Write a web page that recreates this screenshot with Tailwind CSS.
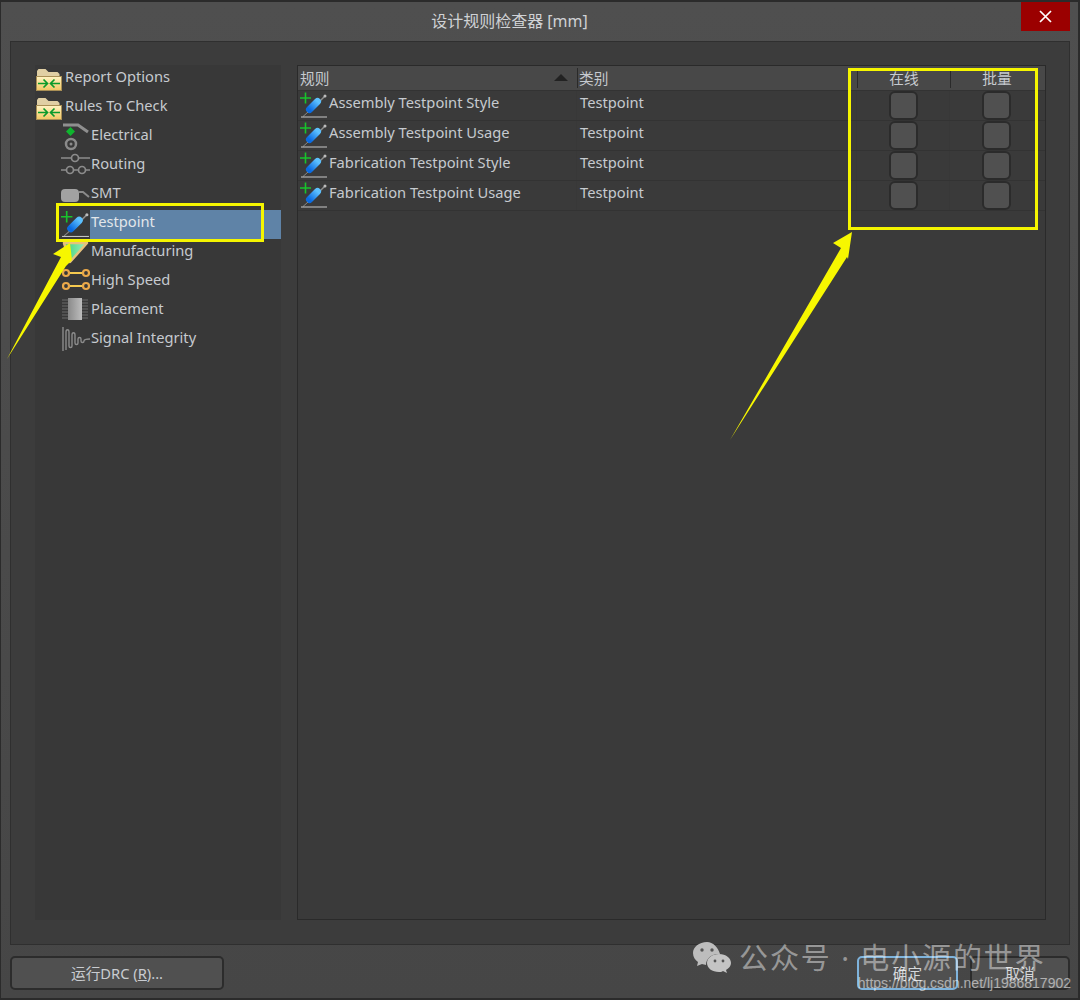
<!DOCTYPE html>
<html lang="en">
<head>
    <meta charset="UTF-8">
    <title>设计规则检查器 [mm]</title>
    <script src="https://cdn.jsdelivr.net/npm/@tailwindcss/browser@4"></script>
</head>
<body class="bg-[#4a4a4a] overflow-hidden font-['Noto_Sans','Noto_Sans_CJK_SC',sans-serif] text-[#c6cacf]">
    <svg class="absolute w-0 h-0">
        <defs>
            <linearGradient id="folderFront" x1="0" y1="0" x2="0" y2="1"><stop offset="0" stop-color="#fff4c4"/><stop offset="1" stop-color="#f2c763"/></linearGradient>
            <linearGradient id="pill" x1="1" y1="0" x2="0" y2="1" gradientUnits="objectBoundingBox"><stop offset="0" stop-color="#5cc0ff"/><stop offset="1" stop-color="#0a6ae0"/></linearGradient>
            <linearGradient id="chip" x1="0" y1="0" x2="1" y2="0"><stop offset="0" stop-color="#8a8a8a"/><stop offset="1" stop-color="#bdbdbd"/></linearGradient>
            <linearGradient id="mfg" x1="0" y1="0" x2="1" y2="0"><stop offset="0" stop-color="#3fd07a"/><stop offset="1" stop-color="#9df0bd"/></linearGradient>
        </defs>
        <symbol id="folder" viewBox="0 0 26 23">
            <path d="M1 22V3l1.500-2h7l3 3h9l2 2v3H1z" fill="#e0cfa4"/>
            <rect x="0.500" y="8.500" width="25" height="14" fill="url(#folderFront)" stroke="#a98f55"/>
            <path d="M2 15.500h9M7.500 11.500l4 4-4 4M24 15.500h-9M18.500 11.500l-4 4 4 4" fill="none" stroke="#0b9a2b" stroke-width="1.700"/>
        </symbol>
        <symbol id="testpoint" viewBox="0 0 28 27">
            <path d="M0 7h11M5.500 1.500v11" stroke="#18c42c" stroke-width="1.600"/>
            <path d="M20 10l5-5" stroke="#8f8f8f" stroke-width="1.500"/>
            <circle cx="25" cy="5" r="1.500" fill="#bbb"/>
            <path d="M9.500 18.500l8-8" stroke="url(#pill)" stroke-width="7" stroke-linecap="round"/>
            <path d="M8 21l-5 4.500" stroke="#888" stroke-width="1"/>
            <path d="M1 26h26" stroke="#c8c8c8" stroke-width="1"/>
        </symbol>
    </svg>

    <div class="relative w-[1080px] h-[1000px] border-t-2 border-l border-r-2 border-b-2 border-[#2b2b2b] bg-gradient-to-b from-[#4f4f4f] to-[#464646]">
        <!-- title bar -->
        <div class="relative h-[39px] flex items-center justify-center text-[16px] text-[#d0d2d5]">
            <span class="mr-[60px] -mt-[2px]">设计规则检查器 [mm]</span>
            <div class="absolute right-[8px] top-0 w-[49px] h-[29px] bg-[#9b0000] flex items-center justify-center">
                <svg class="w-[13px] h-[13px]" viewBox="0 0 13 13"><path d="M1 1l11 11M12 1L1 12" stroke="#fff" stroke-width="1.700"/></svg>
            </div>
        </div>

        <!-- main panel -->
        <div class="ml-[9px] w-[1060px] h-[904px] bg-[#3c3c3c] border border-[#2f2f2f] pt-[23px] pl-[24px] flex gap-[16px]">
            <!-- tree -->
            <div class="w-[246px] h-[855px] bg-[#383838] text-[14.7px] pt-[1px]">
                <div class="h-[29px] flex"><svg class="w-[26px] h-[23px] ml-[1px] mt-[2px]"><use href="#folder"/></svg><span class="ml-[3px] -mt-[1px]">Report Options</span></div>
                <div class="h-[29px] flex"><svg class="w-[26px] h-[23px] ml-[1px] mt-[2px]"><use href="#folder"/></svg><span class="ml-[3px] -mt-[1px]">Rules To Check</span></div>
                <div class="h-[29px] flex pl-[26px]">
                    <svg class="w-[30px] h-[29px] -mt-[1px]" viewBox="0 0 30 29"><path d="M2 2h15l10 7" fill="none" stroke="#8f8f8f" stroke-width="3"/><path d="M9.500 4l4.500 4.500-4.500 4.500L5 8.500z" fill="#0fb52e"/><circle cx="10" cy="21" r="5" fill="none" stroke="#8a8a8a" stroke-width="2.500"/><circle cx="10" cy="21" r="1.500" fill="#8a8a8a"/></svg>
                    <span class="-mt-[1px]">Electrical</span>
                </div>
                <div class="h-[29px] flex pl-[25px]">
                    <svg class="w-[31px] h-[29px] -mt-[1px]" viewBox="0 0 31 29" fill="none" stroke="#8c8c8c" stroke-width="1.700"><path d="M1 6h10m8 0h11M1 18h5m8 0h4m7 0h5"/><circle cx="15" cy="6" r="3.500"/><circle cx="10" cy="18" r="3.500"/><circle cx="22" cy="18" r="3.500"/></svg>
                    <span class="-mt-[1px]">Routing</span>
                </div>
                <div class="h-[29px] flex pl-[26px]">
                    <svg class="w-[30px] h-[29px] -mt-[1px]" viewBox="0 0 30 29"><rect x="0" y="8" width="18" height="13" rx="4" fill="#a2a2a2"/><path d="M18 11h4l6 5" fill="none" stroke="#8a8a8a" stroke-width="2"/></svg>
                    <span class="-mt-[1px]">SMT</span>
                </div>
                <div class="h-[29px] flex pl-[26px]">
                    <svg class="w-[29px] h-[29px] -mt-[2px]"><use href="#testpoint"/></svg>
                    <span class="flex-1 bg-[#5f83a7] text-[#e2e6ea] h-[29px] -mt-[1px] leading-[23px] pl-[1px]">Testpoint</span>
                </div>
                <div class="h-[29px] flex pl-[26px]">
                    <svg class="w-[30px] h-[29px] -mt-[1px]" viewBox="0 0 30 29"><path d="M3 4h23L9 23z" fill="url(#mfg)" stroke="#e6c27c" stroke-width="2.500" stroke-linejoin="round"/></svg>
                    <span class="-mt-[1px]">Manufacturing</span>
                </div>
                <div class="h-[29px] flex pl-[26px]">
                    <svg class="w-[30px] h-[29px] -mt-[1px]" viewBox="0 0 30 29" fill="none" stroke="#eba94a" stroke-width="2.200"><path d="M7 5h15M7 18h15" stroke="#f4c94f"/><circle cx="5" cy="5" r="3"/><circle cx="25" cy="5" r="3"/><circle cx="5" cy="18" r="3"/><circle cx="25" cy="18" r="3"/></svg>
                    <span class="-mt-[1px]">High Speed</span>
                </div>
                <div class="h-[29px] flex pl-[26px]">
                    <svg class="w-[30px] h-[29px] -mt-[1px]" viewBox="0 0 30 29"><path d="M1 3h26M1 6h26M1 9h26M1 12h26M1 15h26M1 18h26M1 21h26" stroke="#6a6a6a"/><rect x="7" y="1" width="14" height="22" fill="url(#chip)"/></svg>
                    <span class="-mt-[1px]">Placement</span>
                </div>
                <div class="h-[29px] flex pl-[26px]">
                    <svg class="w-[30px] h-[29px] -mt-[1px]" viewBox="0 0 30 29"><path d="M2 1v24M5 24V6c0-3 3-3 3 0v14c0 2 3 2 3 0V9c0-3 3-3 3 0v8c0 2 3 2 3 0v-4c0-2 3-2 3 0v2c0 2 3 2 3 0 0-1 2-2 6-2" fill="none" stroke="#8b8b8b" stroke-width="1.400"/></svg>
                    <span class="-mt-[1px]">Signal Integrity</span>
                </div>
            </div>

            <!-- rules table -->
            <div class="w-[749px] h-[855px] border border-[#2a2a2a] bg-[#3a3a3a] text-[14.7px]">
                <div class="h-[25px] bg-[#484848] border-b border-[#333] flex items-center">
                    <div class="w-[279px] pl-[2px] flex items-center justify-between pr-[9px]"><span>规则</span><span class="w-0 h-0 border-l-[7px] border-r-[7px] border-b-[7px] border-l-transparent border-r-transparent border-b-[#222]"></span></div>
                    <div class="w-[280px] h-[20px] border-l border-[#2a2a2a] pl-[1px] flex items-center">类别</div>
                    <div class="w-[93px] h-[20px] border-l border-[#2a2a2a] flex items-center justify-center">在线</div>
                    <div class="w-[93px] h-[20px] border-l border-[#2a2a2a] flex items-center justify-center">批量</div>
                </div>
                <div class="h-[30px] flex items-center border-b border-[#333]">
                    <div class="w-[279px] h-full flex border-r border-[#383838]"><svg class="w-[28px] h-[27px] ml-[2px]"><use href="#testpoint"/></svg><span class="ml-[1px]">Assembly Testpoint Style</span></div>
                    <div class="w-[280px] h-full border-r border-[#383838] pl-[3px]">Testpoint</div>
                    <div class="w-[93px] h-full border-r border-[#383838] flex items-center justify-center"><span class="w-[29px] h-[29px] rounded-[6px] bg-[#505050] border-2 border-[#2b2b2b]"></span></div>
                    <div class="w-[93px] h-full flex items-center justify-center"><span class="w-[29px] h-[29px] rounded-[6px] bg-[#505050] border-2 border-[#2b2b2b]"></span></div>
                </div>
                <div class="h-[30px] flex items-center border-b border-[#333]">
                    <div class="w-[279px] h-full flex border-r border-[#383838]"><svg class="w-[28px] h-[27px] ml-[2px]"><use href="#testpoint"/></svg><span class="ml-[1px]">Assembly Testpoint Usage</span></div>
                    <div class="w-[280px] h-full border-r border-[#383838] pl-[3px]">Testpoint</div>
                    <div class="w-[93px] h-full border-r border-[#383838] flex items-center justify-center"><span class="w-[29px] h-[29px] rounded-[6px] bg-[#505050] border-2 border-[#2b2b2b]"></span></div>
                    <div class="w-[93px] h-full flex items-center justify-center"><span class="w-[29px] h-[29px] rounded-[6px] bg-[#505050] border-2 border-[#2b2b2b]"></span></div>
                </div>
                <div class="h-[30px] flex items-center border-b border-[#333]">
                    <div class="w-[279px] h-full flex border-r border-[#383838]"><svg class="w-[28px] h-[27px] ml-[2px]"><use href="#testpoint"/></svg><span class="ml-[1px]">Fabrication Testpoint Style</span></div>
                    <div class="w-[280px] h-full border-r border-[#383838] pl-[3px]">Testpoint</div>
                    <div class="w-[93px] h-full border-r border-[#383838] flex items-center justify-center"><span class="w-[29px] h-[29px] rounded-[6px] bg-[#505050] border-2 border-[#2b2b2b]"></span></div>
                    <div class="w-[93px] h-full flex items-center justify-center"><span class="w-[29px] h-[29px] rounded-[6px] bg-[#505050] border-2 border-[#2b2b2b]"></span></div>
                </div>
                <div class="h-[30px] flex items-center border-b border-[#333]">
                    <div class="w-[279px] h-full flex border-r border-[#383838]"><svg class="w-[28px] h-[27px] ml-[2px]"><use href="#testpoint"/></svg><span class="ml-[1px]">Fabrication Testpoint Usage</span></div>
                    <div class="w-[280px] h-full border-r border-[#383838] pl-[3px]">Testpoint</div>
                    <div class="w-[93px] h-full border-r border-[#383838] flex items-center justify-center"><span class="w-[29px] h-[29px] rounded-[6px] bg-[#505050] border-2 border-[#2b2b2b]"></span></div>
                    <div class="w-[93px] h-full flex items-center justify-center"><span class="w-[29px] h-[29px] rounded-[6px] bg-[#505050] border-2 border-[#2b2b2b]"></span></div>
                </div>
            </div>
        </div>

        <!-- footer buttons -->
        <div class="mt-[11px] ml-[9px] w-[1060px] flex text-[14.7px]">
            <button class="w-[214px] h-[34px] rounded-[5px] bg-[#505050] border-2 border-[#2c2c2c] text-[#c9ccd0]">运行DRC (<span class="underline">R</span>)...</button>
            <button class="ml-auto w-[101px] h-[34px] rounded-[5px] bg-[#505050] border-2 border-[#7eb3dc] text-[#d5d7da]">确定</button>
            <button class="ml-[12px] w-[100px] h-[34px] rounded-[5px] bg-[#505050] border-2 border-[#2c2c2c] text-[#d5d7da]">取消</button>
        </div>

        <!-- annotations laid over the screenshot -->
        <div class="absolute left-[55px] top-[201px] w-[208px] h-[39px] border-[3px] border-[#f5f500]"></div>
        <div class="absolute left-[847px] top-[66px] w-[190px] h-[162px] border-[3px] border-[#f5f500]"></div>
        <svg class="absolute left-[-1px] top-[-2px] w-[1080px] h-[1000px] pointer-events-none" viewBox="0 0 1080 1000">
            <path d="M70 243L53 254l8 3L7 359l59-93 6-6z" fill="#f7f700"/>
            <path d="M852 232l-19 11 8 5-111 192 117-183 1 2z" fill="#f7f700"/>
        </svg>

        <!-- watermark -->
        <div class="absolute left-[691px] top-[934px] flex items-center text-[29px] text-white/45 tracking-[1.900px] whitespace-nowrap">
            <svg class="w-[40px] h-[34px] mr-[7px]" viewBox="0 0 40 34"><path d="M15 1C7 1 1 6 1 12c0 4 2 7 5 9l-1 4 5-2c1 0 3 1 4 1 0-6 5-11 12-11h2C26 6 21 1 15 1z" fill="#bdbdbd"/><path d="M27 13c-7 0-12 4-12 9s5 9 12 9c1 0 3 0 4-1l4 2-1-3c3-2 5-4 5-7 0-5-5-9-12-9z" fill="#c4c4c4"/><circle cx="10" cy="9" r="1.700" fill="#555"/><circle cx="20" cy="9" r="1.700" fill="#555"/><circle cx="23" cy="20" r="1.400" fill="#555"/><circle cx="31" cy="20" r="1.400" fill="#555"/></svg>
            <span>公众号 · 电小源的世界</span>
        </div>
        <div class="absolute right-[7px] top-[971px] font-['Liberation_Sans',sans-serif] text-[14px] text-white/55 whitespace-nowrap">https://blog.csdn.net/lj1986817902</div>
    </div>
</body>
</html>
